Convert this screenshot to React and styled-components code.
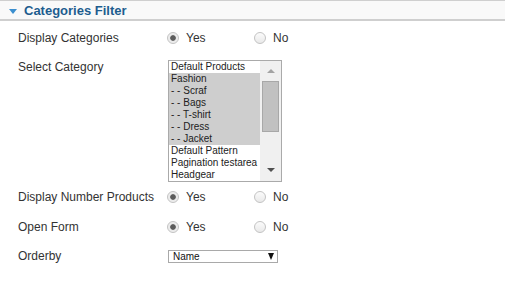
import React from "react";
import styled, { createGlobalStyle } from "styled-components";

const GlobalStyle = createGlobalStyle`
  body {
    margin: 0;
    background: #fff;
    font-family: "Liberation Sans", Arial, sans-serif;
  }
`;

const categories = [
  { name: "Default Products", selected: false },
  { name: "Fashion", selected: true },
  { name: "- - Scraf", selected: true },
  { name: "- - Bags", selected: true },
  { name: "- - T-shirt", selected: true },
  { name: "- - Dress", selected: true },
  { name: "- - Jacket", selected: true },
  { name: "Default Pattern", selected: false },
  { name: "Pagination testarea", selected: false },
  { name: "Headgear", selected: false },
];

const Radio = ({ checked, label }) => (
  <Option>
    <RadioDot $checked={checked} />
    <span>{label}</span>
  </Option>
);

const YesNo = ({ value }) => (
  <Choices>
    <Radio checked={value} label="Yes" />
    <Radio checked={!value} label="No" />
  </Choices>
);

const App = () => {
  return (
    <Wrapper>
      <GlobalStyle />
      <Header>
        <Caret />
        Categories Filter
      </Header>
      <Form>
        <Row>
          <Label>Display Categories</Label>
          <YesNo value />
        </Row>
        <ListRow>
          <Label>Select Category</Label>
          <ListBox>
            <Items>
              {categories.map((cat, index) => (
                <Item key={index} $selected={cat.selected}>
                  {cat.name}
                </Item>
              ))}
            </Items>
            <ScrollBar>
              <Arrow $up />
              <Track>
                <Thumb />
              </Track>
              <Arrow />
            </ScrollBar>
          </ListBox>
        </ListRow>
        <Row>
          <Label>Display Number Products</Label>
          <YesNo value />
        </Row>
        <Row>
          <Label>Open Form</Label>
          <YesNo value />
        </Row>
        <Row $last>
          <Label>Orderby</Label>
          <Select>
            <span>Name</span>
            <SelectCaret />
          </Select>
        </Row>
      </Form>
    </Wrapper>
  );
};

const Wrapper = styled.div`
  width: 506px;
  height: 289px;
  overflow: hidden;
  color: #333;
`;

const Header = styled.div`
  width: 505px;
  height: 18px;
  box-sizing: content-box;
  border-top: 1px solid #cfcfcf;
  border-bottom: 2px solid #cfcfcf;
  background: #f9f9f9;
  display: flex;
  align-items: center;
  padding-left: 9px;
  box-sizing: border-box;
  height: 21px;
  font-size: 13px;
  font-weight: bold;
  color: #1d5d8f;
`;

const Caret = styled.span`
  width: 0;
  height: 0;
  border-left: 4px solid transparent;
  border-right: 4px solid transparent;
  border-top: 5px solid #3b8fcf;
  margin: 2px 7px 0 0;
`;

const Form = styled.div`
  padding: 2px 0 0 18px;
  font-size: 12px;
`;

const Row = styled.div`
  display: grid;
  grid-template-columns: 150px 1fr;
  align-items: center;
  height: ${({ $last }) => ($last ? "28px" : "30px")};
`;

const ListRow = styled.div`
  display: grid;
  grid-template-columns: 150px 1fr;
  align-items: start;
  margin-top: 7px;
`;

const Label = styled.div`
  line-height: 14px;
  white-space: nowrap;
  ${ListRow} & {
    margin-top: 0;
  }
`;

const Choices = styled.div`
  display: flex;
  align-items: center;
`;

const Option = styled.label`
  display: flex;
  align-items: center;
  gap: 7px;
  width: 88px;
  margin-left: -1px;
`;

const RadioDot = styled.span`
  width: 12px;
  height: 12px;
  border-radius: 50%;
  box-sizing: border-box;
  border: 1px solid #c3c3c3;
  background: ${({ $checked }) =>
    $checked
      ? "radial-gradient(circle, #5c5c5c 0 2.4px, #e9e9e9 3.2px, #f4f4f4 100%)"
      : "linear-gradient(#fbfbfb, #e9e9e9)"};
`;

const ListBox = styled.div`
  display: flex;
  width: 114px;
  height: 122px;
  box-sizing: border-box;
  border: 1px solid #aaa;
  background: #fff;
  font-size: 10px;
  color: #222;
`;

const Items = styled.div`
  flex: 1;
  overflow: hidden;
`;

const Item = styled.div`
  height: 12px;
  line-height: 12px;
  padding-left: 2px;
  white-space: nowrap;
  background: ${({ $selected }) => ($selected ? "#cecece" : "transparent")};
`;

const ScrollBar = styled.div`
  width: 21px;
  display: flex;
  flex-direction: column;
  align-items: center;
  background: #f0f0f0;
`;

const Arrow = styled.span`
  width: 0;
  height: 0;
  margin: ${({ $up }) => ($up ? "8px 0 5px" : "5px 0 9px")};
  border-left: 4px solid transparent;
  border-right: 4px solid transparent;
  ${({ $up }) =>
    $up ? "border-bottom: 4px solid #a3a3a3;" : "border-top: 4px solid #505050;"}
`;

const Track = styled.div`
  flex: 1;
  width: 100%;
  display: flex;
  justify-content: center;
`;

const Thumb = styled.div`
  width: 17px;
  height: 51px;
  margin-top: 3px;
  box-sizing: border-box;
  background: #c1c1c1;
  border: 1px solid #a8a8a8;
`;

const Select = styled.div`
  display: flex;
  align-items: center;
  justify-content: space-between;
  width: 110px;
  height: 13px;
  box-sizing: border-box;
  border: 1px solid #a9a9a9;
  padding: 0 3px 0 4px;
  font-size: 10px;
  color: #111;
  background: #fff;
`;

const SelectCaret = styled.span`
  width: 0;
  height: 0;
  border-left: 3.5px solid transparent;
  border-right: 3.5px solid transparent;
  border-top: 7px solid #111;
`;

export default App;
